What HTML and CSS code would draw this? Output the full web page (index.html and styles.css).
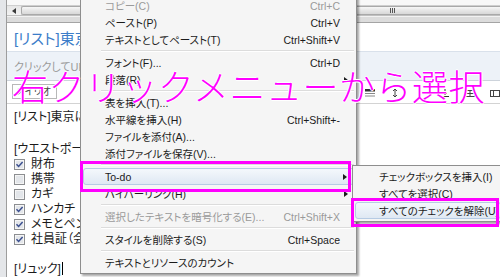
FILE: index.html
```html
<!DOCTYPE html>
<html lang="ja">
  <head>
    <meta charset="utf-8">
    <title>To-do メニュー</title>
    <link rel="stylesheet" href="styles.css">
  </head>

  <body>
    <div class="window">
      <div class="frame-left"></div>
      <div class="main">
        <div class="top-gap"></div>
        <div class="hscroll">
          <div class="hscroll-btn">
            <svg width="4" height="6" viewBox="0 0 4 6"><path d="M4 0 L0 3 L4 6 Z" fill="#3a3a3a"/></svg>
          </div>
          <div class="hscroll-thumb">
            <svg width="6" height="5" viewBox="0 0 6 5"><path d="M0.5 0 V5 M2.5 0 V5 M4.5 0 V5" stroke="#555" stroke-width="1"/></svg>
          </div>
        </div>
        <div class="hscroll-foot"></div>

        <div class="note-title">[リスト]東京出張の持ち物</div>
        <div class="url-bar">クリックしてURLを設定</div>

        <div class="toolbar">
          <div class="font-box">メイリオ</div>
          <div class="tool-icons">
            <svg width="10" height="8" viewBox="0 0 10 8"><path d="M0 1.5 H10 M0 4 H10" stroke="#888"/><rect x="0" y="5.5" width="10" height="2.5" fill="#333"/></svg>
            <svg width="10" height="8" viewBox="0 0 10 8"><rect x="0" y="0" width="10" height="2.5" fill="#333"/><path d="M0 4.5 H10 M0 7 H10" stroke="#888"/></svg>
            <svg width="10" height="8" viewBox="0 0 10 8"><path d="M5 0 V8 M3 2 L5 0 L7 2 M3 6 L5 8 L7 6" stroke="#444" fill="none"/></svg>
            <svg width="10" height="8" viewBox="0 0 10 8"><path d="M5 1 V2.5 M5 5 V6.5" stroke="#444"/></svg>
            <svg width="10" height="8" viewBox="0 0 10 8"><path d="M1 7.5 H9 M5 0 V6 M3 4 L5 6 L7 4" stroke="#333" fill="none"/></svg>
            <svg width="10" height="8" viewBox="0 0 10 8"><rect x="0.5" y="1.5" width="9" height="6" fill="none" stroke="#444"/><path d="M5 1.5 V7.5 M0.5 4.5 H9.5" stroke="#444"/></svg>
            <svg width="10" height="8" viewBox="0 0 10 8"><rect x="0.5" y="1.5" width="9" height="6" fill="none" stroke="#444"/><path d="M3.5 1.5 V7.5" stroke="#444"/></svg>
          </div>
        </div>

        <div class="note-body">
          <div class="para">[リスト]東京に出張する時の持ち物</div>
          <div>[ウエストポーチ]</div>
          <div class="check-row">
            <svg class="cb" width="11" height="11" viewBox="0 0 11 11"><rect x="0.5" y="0.5" width="10" height="10" fill="#f5f5f5" stroke="#8c8e91"/><rect x="2" y="2" width="7" height="7" fill="#e3e6ea"/><path d="M2.5 5.2 L4.6 7.4 L8.6 3" stroke="#3b4f8f" stroke-width="1.5" fill="none"/></svg>
            <span>財布</span>
          </div>
          <div class="check-row">
            <svg class="cb" width="11" height="11" viewBox="0 0 11 11"><rect x="0.5" y="0.5" width="10" height="10" fill="#f5f5f5" stroke="#8c8e91"/><rect x="2" y="2" width="7" height="7" fill="#e3e6ea"/></svg>
            <span>携帯</span>
          </div>
          <div class="check-row">
            <svg class="cb" width="11" height="11" viewBox="0 0 11 11"><rect x="0.5" y="0.5" width="10" height="10" fill="#f5f5f5" stroke="#8c8e91"/><rect x="2" y="2" width="7" height="7" fill="#e3e6ea"/></svg>
            <span>カギ</span>
          </div>
          <div class="check-row">
            <svg class="cb" width="11" height="11" viewBox="0 0 11 11"><rect x="0.5" y="0.5" width="10" height="10" fill="#f5f5f5" stroke="#8c8e91"/><rect x="2" y="2" width="7" height="7" fill="#e3e6ea"/><path d="M2.5 5.2 L4.6 7.4 L8.6 3" stroke="#3b4f8f" stroke-width="1.5" fill="none"/></svg>
            <span>ハンカチ</span>
          </div>
          <div class="check-row">
            <svg class="cb" width="11" height="11" viewBox="0 0 11 11"><rect x="0.5" y="0.5" width="10" height="10" fill="#f5f5f5" stroke="#8c8e91"/><rect x="2" y="2" width="7" height="7" fill="#e3e6ea"/><path d="M2.5 5.2 L4.6 7.4 L8.6 3" stroke="#3b4f8f" stroke-width="1.5" fill="none"/></svg>
            <span>メモとペン</span>
          </div>
          <div class="check-row para">
            <svg class="cb" width="11" height="11" viewBox="0 0 11 11"><rect x="0.5" y="0.5" width="10" height="10" fill="#f5f5f5" stroke="#8c8e91"/><rect x="2" y="2" width="7" height="7" fill="#e3e6ea"/><path d="M2.5 5.2 L4.6 7.4 L8.6 3" stroke="#3b4f8f" stroke-width="1.5" fill="none"/></svg>
            <span>社員証（会社のIDカード）</span>
          </div>
          <div>[リュック]<span class="caret"></span></div>
        </div>
      </div>
    </div>

    <!-- context menu -->
    <div class="menu">
      <div class="mi disabled"><span>コピー(C)</span><span class="key">Ctrl+C</span></div>
      <div class="mi"><span>ペースト(P)</span><span class="key">Ctrl+V</span></div>
      <div class="mi"><span>テキストとしてペースト(T)</span><span class="key">Ctrl+Shift+V</span></div>
      <div class="sep"></div>
      <div class="mi"><span>フォント(F)...</span><span class="key">Ctrl+D</span></div>
      <div class="mi"><span>段落(R)</span><span class="arrow"></span></div>
      <div class="sep"></div>
      <div class="mi"><span>表を挿入(T)...</span></div>
      <div class="mi"><span>水平線を挿入(H)</span><span class="key">Ctrl+Shift+-</span></div>
      <div class="mi"><span>ファイルを添付(A)...</span></div>
      <div class="mi"><span>添付ファイルを保存(V)...</span></div>
      <div class="sep"></div>
      <div class="mi active"><span>To-do</span><span class="arrow"></span></div>
      <div class="mi"><span>ハイパーリンク(H)</span><span class="arrow"></span></div>
      <div class="sep"></div>
      <div class="mi disabled"><span>選択したテキストを暗号化する(E)...</span><span class="key">Ctrl+Shift+X</span></div>
      <div class="sep"></div>
      <div class="mi"><span>スタイルを削除する(S)</span><span class="key">Ctrl+Space</span></div>
      <div class="sep"></div>
      <div class="mi"><span>テキストとリソースのカウント</span></div>
    </div>

    <div class="menu submenu">
      <div class="mi"><span>チェックボックスを挿入(I)</span></div>
      <div class="mi"><span>すべてを選択(C)</span></div>
      <div class="mi active"><span>すべてのチェックを解除(U)</span></div>
    </div>

    <div class="mark mark-todo"></div>
    <div class="mark mark-uncheck"></div>
    <div class="caption">右クリックメニューから選択</div>
  </body>
</html>
```

FILE: styles.css
```css
* {
  box-sizing: border-box;
}
body {
  margin: 0;
  width: 500px;
  height: 277px;
  overflow: hidden;
  position: relative;
  background: #fff;
  color: #1b1b1b;
  font-family: "Liberation Sans", "Noto Sans CJK JP", sans-serif;
  font-feature-settings: "palt";
}
.window {
  display: flex;
  height: 277px;
}
.frame-left {
  width: 7px;
  background: #e4e6e9;
  border-right: 1px solid #9d9d9d;
}
.main {
  flex: 1;
  min-width: 0;
  display: flex;
  flex-direction: column;
}
.top-gap {
  height: 5px;
  background: #f8f8f8;
}
.hscroll {
  height: 12px;
  display: flex;
  background: linear-gradient(#e6e6e6, #f2f2f2);
  border-top: 1px solid #cfcfcf;
  border-bottom: 1px solid #c0c0c0;
}
.hscroll-btn {
  width: 14px;
  display: flex;
  align-items: center;
  justify-content: center;
}
.hscroll-thumb {
  flex: 1;
  display: flex;
  align-items: center;
  padding-left: 368px;
  border: 1px solid #a9a9a9;
  border-right: none;
  border-radius: 2px 0 0 2px;
  background: linear-gradient(#f7f7f7, #e6e6e6 50%, #d8d8d8);
}
.hscroll-foot {
  height: 7px;
  background: #dcdcdc;
  border-top: 1px solid #f2f2f2;
  border-bottom: 1px solid #a4a4a4;
}
.note-title {
  height: 29px;
  display: flex;
  align-items: center;
  padding-left: 7px;
  font-size: 15px;
  color: #3c7dc9;
  white-space: nowrap;
}
.url-bar {
  height: 30px;
  display: flex;
  align-items: center;
  padding-left: 7px;
  background: #edf2f8;
  border-top: 1px solid #d9e1eb;
  font-size: 11px;
  color: #9b9b9b;
  white-space: nowrap;
}
.toolbar {
  height: 25px;
  display: flex;
  align-items: center;
  padding-left: 5px;
  border-top: 1px solid #cdd3db;
  border-bottom: 1px solid #d3d3d3;
  white-space: nowrap;
}
.font-box {
  width: 68px;
  height: 15px;
  padding-left: 3px;
  border: 1px solid #b8b8b8;
  font-size: 10px;
  line-height: 13px;
  color: #444;
}
.tool-icons {
  display: flex;
  gap: 15px;
  margin-left: 283px;
  padding-top: 3px;
}
.note-body {
  padding: 6px 0 0 7px;
  font-size: 12px;
  line-height: 15px;
  white-space: nowrap;
}
.para {
  margin-bottom: 17px;
}
.note-body .check-row.para {
  margin-bottom: 15px;
}
.check-row {
  display: flex;
  align-items: center;
  gap: 6px;
  height: 15px;
}
.caret {
  display: inline-block;
  width: 1px;
  height: 13px;
  margin-left: 1px;
  background: #000;
  vertical-align: -2px;
}

/* context menu */
.menu {
  position: absolute;
  left: 80px;
  top: -6px;
  width: 277px;
  padding: 2px;
  background: #f5f5f5;
  border: 1px solid #8e8e8e;
  box-shadow: 2px 2px 2px rgba(0, 0, 0, 0.35);
  font-size: 10.5px;
  white-space: nowrap;
}
.submenu {
  left: 352px;
  top: 165px;
  width: 152px;
}
.mi {
  display: flex;
  align-items: center;
  height: 17px;
  padding: 0 6px 0 22px;
}
.submenu .mi {
  padding-left: 24px;
}
.mi.disabled {
  color: #9a9a9a;
}
.mi.active {
  padding-left: 21px;
  background: linear-gradient(#f4f8fc, #dfe8f3);
  border: 1px solid #b6cbe4;
  border-radius: 3px;
}
.submenu .mi.active {
  padding-left: 23px;
}
.key {
  margin-left: auto;
  margin-right: 8px;
}
.arrow {
  margin-left: auto;
  width: 0;
  height: 0;
  border-left: 4px solid #1b1b1b;
  border-top: 3.5px solid transparent;
  border-bottom: 3.5px solid transparent;
}
.sep {
  height: 6px;
  margin-left: 18px;
  padding-top: 2px;
}
.sep::before {
  content: "";
  display: block;
  height: 1px;
  background: #dcdcdc;
  border-bottom: 1px solid #fff;
  box-sizing: content-box;
}

/* annotations */
.mark {
  position: absolute;
  border: 3px solid #f0f;
}
.mark-todo {
  left: 80px;
  top: 161px;
  width: 271px;
  height: 31px;
}
.mark-uncheck {
  left: 351px;
  top: 198px;
  width: 148px;
  height: 29px;
}
.caption {
  position: absolute;
  left: 12px;
  top: 67px;
  font-family: "Noto Sans CJK JP", sans-serif;
  font-feature-settings: normal;
  font-size: 36px;
  font-weight: 300;
  line-height: 36px;
  letter-spacing: 0.5px;
  color: #f0f;
  white-space: nowrap;
  text-shadow: 1px 0 0 #fff, -1px 0 0 #fff, 0 1px 0 #fff, 0 -1px 0 #fff;
}
```
